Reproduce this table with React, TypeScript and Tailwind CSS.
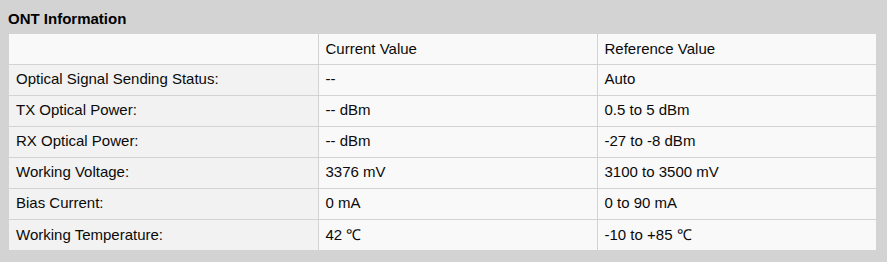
import React from 'react';

interface Row {
  label: string;
  current: string;
  reference: string;
}

const rows: Row[] = [
  { label: 'Optical Signal Sending Status:', current: '--', reference: 'Auto' },
  { label: 'TX Optical Power:', current: '-- dBm', reference: '0.5 to 5 dBm' },
  { label: 'RX Optical Power:', current: '-- dBm', reference: '-27 to -8 dBm' },
  { label: 'Working Voltage:', current: '3376 mV', reference: '3100 to 3500 mV' },
  { label: 'Bias Current:', current: '0 mA', reference: '0 to 90 mA' },
  { label: 'Working Temperature:', current: '42 ℃', reference: '-10 to +85 ℃' },
];

const App: React.FC = () => {
  return (
    <div className="w-[887px] h-[262px] bg-[#d3d3d3] font-['Liberation_Sans',Arial,sans-serif] text-[15px] text-[#0a0a0a]">
      <div className="px-[8px] pt-[10px] h-[34px] font-bold leading-[17px] text-black">ONT Information</div>
      <table className="ml-[9px] w-[867px] border-collapse table-fixed">
        <colgroup>
          <col className="w-[309px]" />
          <col className="w-[279px]" />
          <col className="w-[279px]" />
        </colgroup>
        <thead>
          <tr className="h-[30px] bg-[#f9f9f9]">
            <th className="border-r border-[#d3d3d3] px-[7px] text-left font-normal"></th>
            <th className="border-r border-[#d3d3d3] px-[7px] text-left font-normal">Current Value</th>
            <th className="px-[7px] text-left font-normal">Reference Value</th>
          </tr>
        </thead>
        <tbody>
          {rows.map((row) => (
            <tr key={row.label} className="h-[31px] border-t border-[#d3d3d3]">
              <td className="bg-[#f2f2f2] border-r border-[#d3d3d3] px-[7px]">{row.label}</td>
              <td className="bg-[#f9f9f9] border-r border-[#d3d3d3] px-[7px]">{row.current}</td>
              <td className="bg-[#f9f9f9] px-[7px]">{row.reference}</td>
            </tr>
          ))}
        </tbody>
      </table>
    </div>
  );
};

export default App;
